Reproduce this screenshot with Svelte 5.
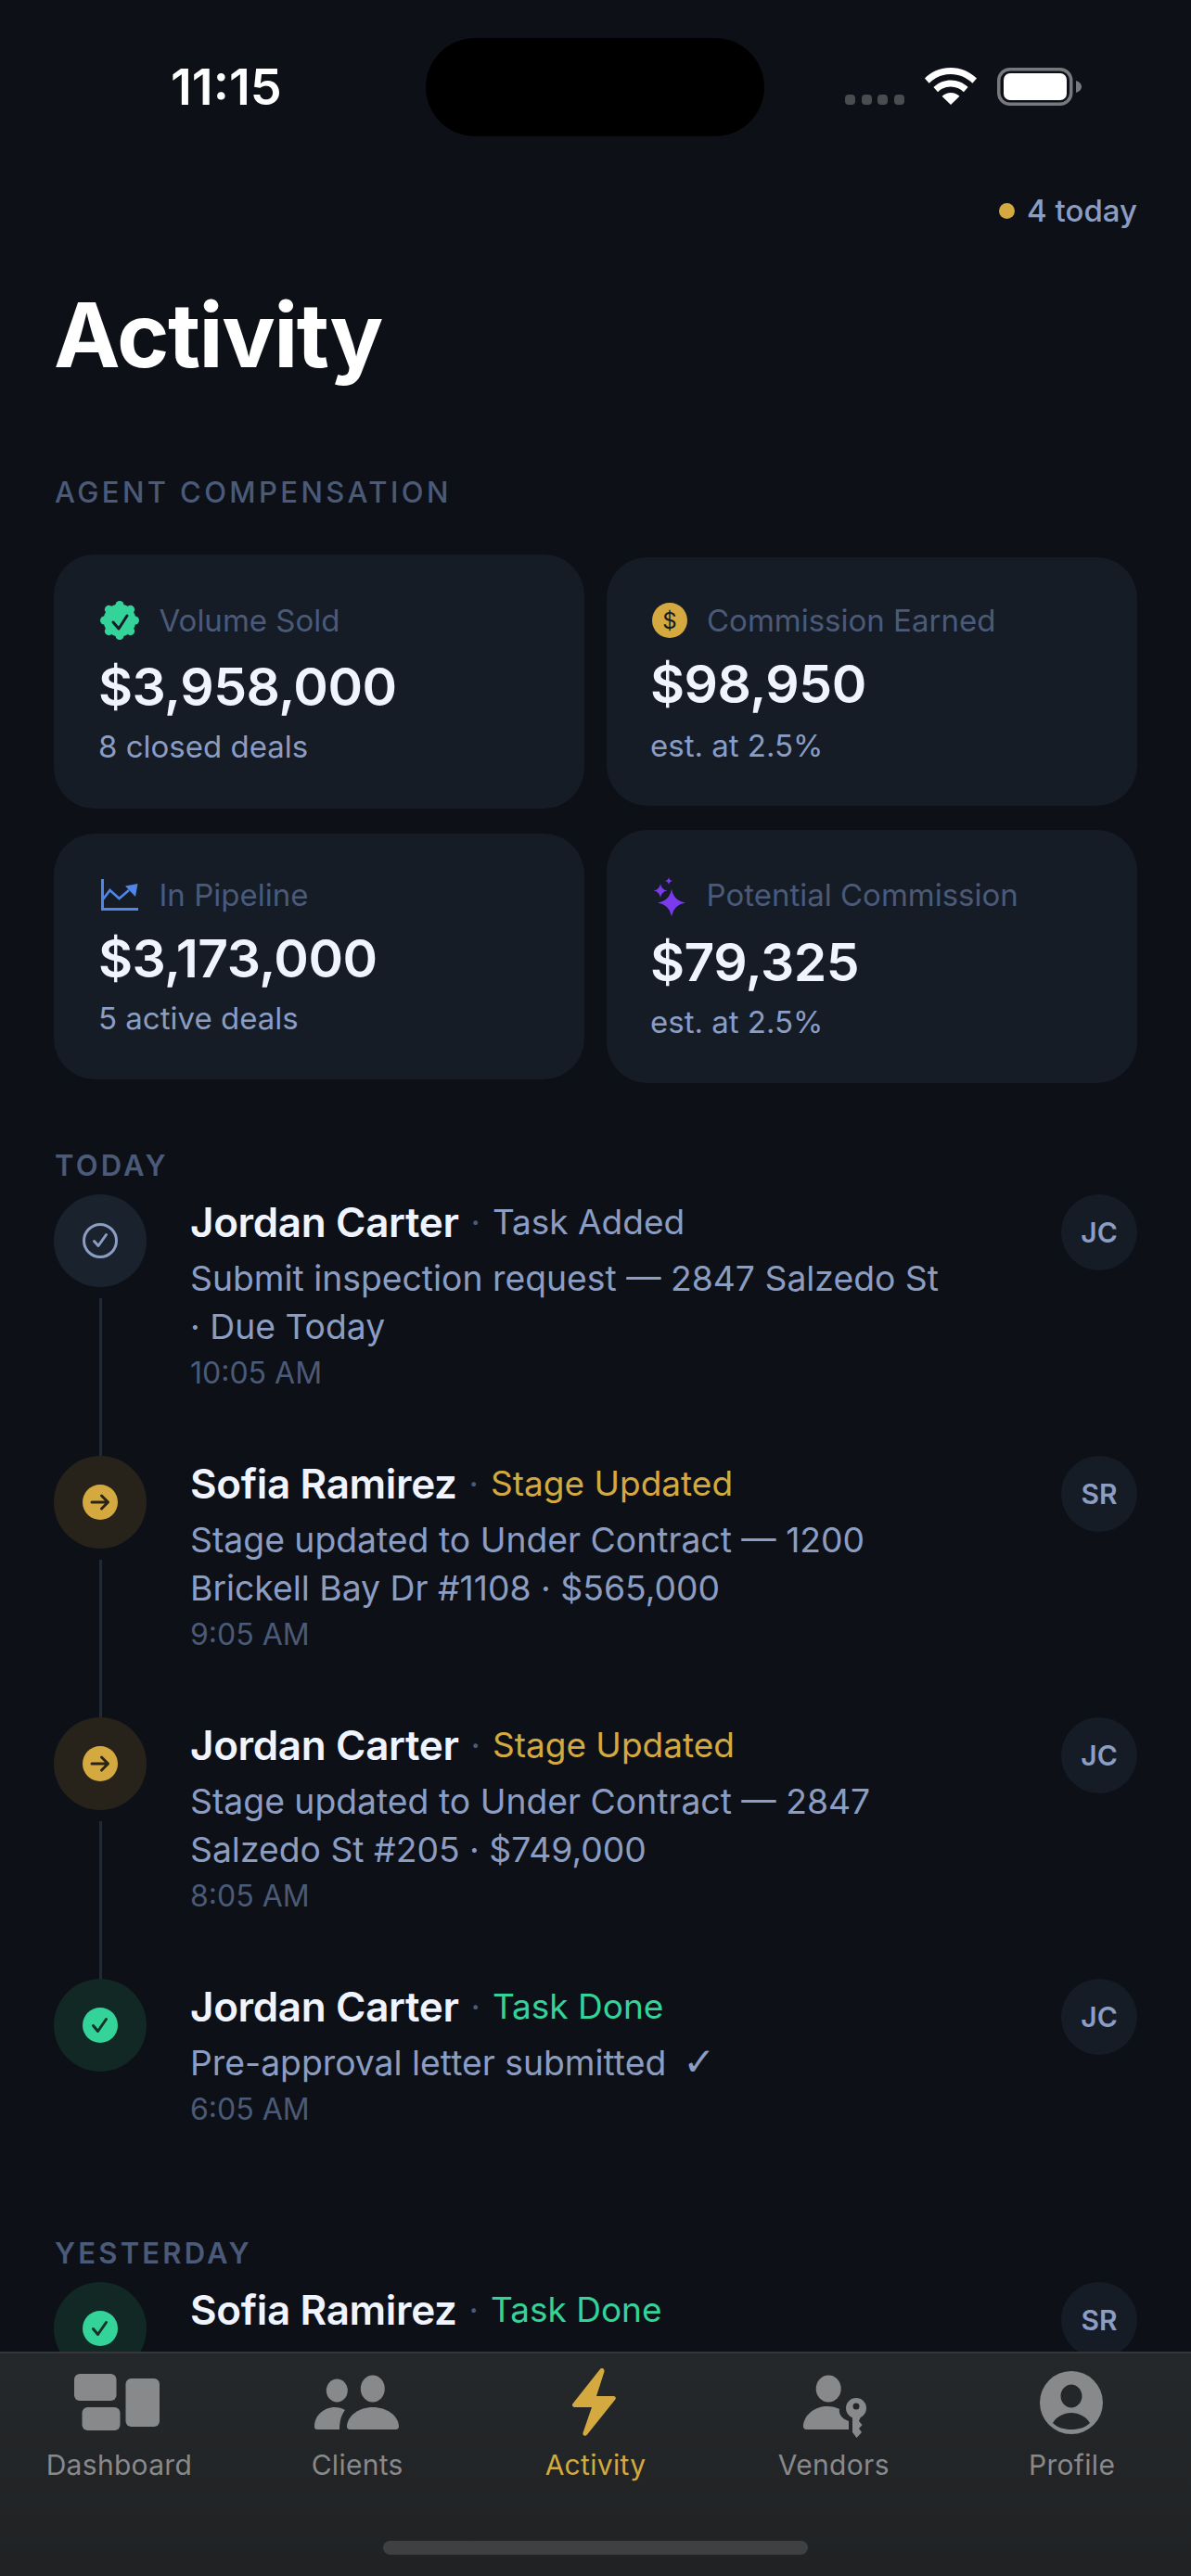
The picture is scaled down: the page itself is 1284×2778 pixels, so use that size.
<script>
  const tabs = [
    { label: "Dashboard", icon: "dash" },
    { label: "Clients", icon: "clients" },
    { label: "Activity", icon: "bolt", active: true },
    { label: "Vendors", icon: "vendors" },
    { label: "Profile", icon: "profile" },
  ];

  const today = [
    {
      name: "Jordan Carter",
      type: "Task Added",
      tone: "slate",
      lines: ["Submit inspection request — 2847 Salzedo St", "· Due Today"],
      time: "10:05 AM",
      initials: "JC",
    },
    {
      name: "Sofia Ramirez",
      type: "Stage Updated",
      tone: "gold",
      lines: ["Stage updated to Under Contract — 1200", "Brickell Bay Dr #1108 · $565,000"],
      time: "9:05 AM",
      initials: "SR",
    },
    {
      name: "Jordan Carter",
      type: "Stage Updated",
      tone: "gold",
      lines: ["Stage updated to Under Contract — 2847", "Salzedo St #205 · $749,000"],
      time: "8:05 AM",
      initials: "JC",
    },
    {
      name: "Jordan Carter",
      type: "Task Done",
      tone: "green",
      lines: ["Pre-approval letter submitted"],
      tick: true,
      time: "6:05 AM",
      initials: "JC",
    },
  ];

  const yesterday = [
    { name: "Sofia Ramirez", type: "Task Done", tone: "green", lines: [], time: "", initials: "SR" },
  ];

  // 8 lobes round the badge
  const lobes = Array.from({ length: 8 }, (_, i) => ({
    x: 16.5 * Math.cos((i * Math.PI) / 4),
    y: 16.5 * Math.sin((i * Math.PI) / 4),
  }));

  function star(cx, cy, r) {
    const k = r * 0.14;
    return `M${cx} ${cy - r}Q${cx + k} ${cy - k} ${cx + r} ${cy}Q${cx + k} ${cy + k} ${cx} ${cy + r}Q${cx - k} ${cy + k} ${cx - r} ${cy}Q${cx - k} ${cy - k} ${cx} ${cy - r}z`;
  }
</script>

{#snippet eventRow(item, last)}
  <div class="event">
    <div class="rail">
      <div class="bubble {item.tone}">
        {#if item.tone === "slate"}
          <svg class="mark" viewBox="0 0 38 38" fill="none" stroke="#8b9dc3" stroke-width="3" stroke-linecap="round" stroke-linejoin="round">
            <circle cx="19" cy="19" r="17.5" />
            <path d="M12.5 19.5l4.5 5 8.5-12" />
          </svg>
        {:else if item.tone === "gold"}
          <svg class="mark" viewBox="0 0 38 38" fill="none" stroke="#2a2418" stroke-width="3" stroke-linecap="round" stroke-linejoin="round">
            <circle cx="19" cy="19" r="19" fill="#d4a93f" stroke="none" />
            <path d="M10 19h17M20.5 12l7 7-7 7" />
          </svg>
        {:else}
          <svg class="mark" viewBox="0 0 38 38" fill="none" stroke="#14312a" stroke-width="3" stroke-linecap="round" stroke-linejoin="round">
            <circle cx="19" cy="19" r="19" fill="#34d399" stroke="none" />
            <path d="M11.5 19.5l5 6 9-13" />
          </svg>
        {/if}
      </div>
      {#if !last}<div class="line"></div>{/if}
    </div>
    <div class="body">
      <div class="head">
        <span class="name">{item.name}</span>
        <span class="sep">·</span>
        <span class="type {item.tone}">{item.type}</span>
      </div>
      {#each item.lines as line}
        <div class="desc">{line}{#if item.tick}<span class="tick">✓</span>{/if}</div>
      {/each}
      {#if item.time}<div class="time">{item.time}</div>{/if}
    </div>
    <div class="avatar">{item.initials}</div>
  </div>
{/snippet}

<div class="phone">
  <div class="status">
    <span class="clock">11:15</span>
    <div class="island"></div>
    <div class="status-right">
      <div class="dots"><i></i><i></i><i></i><i></i></div>
      <svg class="wifi" viewBox="0 0 56 40" fill="#fff">
        <path d="M28 0C17 0 7.500 4.300 0 11.500l4.600 5.200C10.800 10.700 19 7 28 7s17.200 3.700 23.400 9.700l4.600-5.200C48.500 4.300 39 0 28 0z" />
        <path d="M28 13.500c-7.300 0-13.800 2.900-18.600 7.500l4.700 5.200c3.600-3.500 8.500-5.700 13.900-5.700s10.300 2.200 13.900 5.700l4.700-5.200C41.800 16.400 35.300 13.500 28 13.500z" />
        <path d="M28 27c-3.700 0-7 1.400-9.500 3.800L28 40l9.500-9.200C35 28.400 31.700 27 28 27z" />
      </svg>
      <svg class="battery" viewBox="0 0 91 41">
        <rect x="1.750" y="1.750" width="78" height="37.500" rx="12" fill="none" stroke="#77797d" stroke-width="3.500" />
        <rect x="7" y="6" width="68" height="29" rx="7" fill="#fff" />
        <path d="M85 14c3 1 6 3 6 6.500s-3 5.500-6 6.500z" fill="#77797d" />
      </svg>
    </div>
  </div>

  <div class="count"><span class="dot"></span>4 today</div>
  <h1>Activity</h1>
  <div class="section-title">AGENT COMPENSATION</div>

  <div class="stats">
    <div class="stat-col">
      <div class="stat sold">
        <div class="stat-label">
          <svg class="badge" viewBox="-21 -21 42 42">
            <circle r="17.500" fill="#34d399" />
            {#each lobes as lobe}
              <circle cx={lobe.x} cy={lobe.y} r="4.500" fill="#34d399" />
            {/each}
            <path d="M-7 2l6 7 9-14" fill="none" stroke="#151c26" stroke-width="3" stroke-linecap="round" stroke-linejoin="round" />
          </svg>
          Volume Sold
        </div>
        <div class="stat-value">$3,958,000</div>
        <div class="stat-sub">8 closed deals</div>
      </div>
      <div class="stat pipeline">
        <div class="stat-label">
          <svg class="chart" viewBox="0 0 40 34" fill="none">
            <path d="M1.500 0v32.500H40" stroke="#4f86e8" stroke-width="3" />
            <path d="M2 22l7.500-10 10 9L30 12" stroke="#4f86e8" stroke-width="2.600" />
            <path d="M26 7.500L39.500 5 37 19z" fill="#4f86e8" />
          </svg>
          In Pipeline
        </div>
        <div class="stat-value">$3,173,000</div>
        <div class="stat-sub">5 active deals</div>
      </div>
    </div>
    <div class="stat-col right">
      <div class="stat earned">
        <div class="stat-label">
          <span class="coin">$</span>
          Commission Earned
        </div>
        <div class="stat-value">$98,950</div>
        <div class="stat-sub">est. at 2.5%</div>
      </div>
      <div class="stat potential">
        <div class="stat-label">
          <svg class="sparkle" viewBox="0 0 36 42" fill="#7c3aed">
            <path d={star(20, 27.5, 15)} />
            <path d={star(8, 14.5, 7.5)} />
            <path d={star(17, 4, 4)} />
          </svg>
          Potential Commission
        </div>
        <div class="stat-value">$79,325</div>
        <div class="stat-sub">est. at 2.5%</div>
      </div>
    </div>
  </div>

  <div class="day">TODAY</div>
  {#each today as item, i}
    {@render eventRow(item, i === today.length - 1)}
  {/each}

  <div class="day yesterday">YESTERDAY</div>
  {#each yesterday as item}
    {@render eventRow(item, true)}
  {/each}

  <nav class="tabs">
    <div class="tab-row">
      {#each tabs as tab}
        <div class="tab" class:active={tab.active}>
          <svg class="tab-icon" viewBox="0 0 100 80" fill="currentColor">
            {#if tab.icon === "dash"}
              <rect x="2" y="7" width="45.500" height="29" rx="6" />
              <rect x="10.500" y="43" width="41" height="25" rx="6" />
              <rect x="57.500" y="12" width="36.500" height="52" rx="6" />
            {:else if tab.icon === "clients"}
              <ellipse cx="28.300" cy="25" rx="11.500" ry="12.500" />
              <ellipse cx="66.800" cy="23" rx="13" ry="14.500" />
              <path d="M7 67c-2 0-3-1-3-3C4 52 14 43 26 43c4 0 8 1 11 3-4 5-6 12-6 21z" />
              <path d="M43 67c-3 0-4-1-4-4C40 52 52 43 67 43s27 9 28 20c0 3-1 4-4 4z" />
            {:else if tab.icon === "bolt"}
              <path d="M54.500 2.500c2-2.500 5.500-1.500 5 2L51 31h18c3 0 3.500 2.500 2 4L41 72.500c-2 2.500-5.500 1-4.500-2L46 43H28c-3 0-4-2.500-2-4.500z" />
            {:else if tab.icon === "vendors"}
              <ellipse cx="44.200" cy="23" rx="13.500" ry="14.500" />
              <path d="M21 67c-3 0-4.500-2-4-5C19 50 30 42 43 42c5 0 9 1 13 3-1 5 2 10 10 13v9z" />
              <path fill-rule="evenodd" d="M85 44a11 11 0 1 0-22 0a11 11 0 1 0 22 0zM74 38.500a3.500 3.500 0 1 1 0 7a3.500 3.500 0 1 1 0-7z" />
              <path d="M70 50V70l4.500 6 5.500-6-3-4 3.500-4-3.500-4 2-5z" />
            {:else}
              <path fill-rule="evenodd" d="M49 4a34 34 0 1 0 0 68a34 34 0 1 0 0-68zM49 18.500c6.300 0 11.500 5.600 11.500 12.500S55.300 43.500 49 43.500 37.500 37.900 37.500 31 42.700 18.500 49 18.500zM29 60c4-7 12-11 20-11s16 4 20 11c-5 5-12 7-20 7s-15-2-20-7z" />
            {/if}
          </svg>
          <span>{tab.label}</span>
        </div>
      {/each}
    </div>
    <div class="home"></div>
  </nav>
</div>

<style>
  :global(body) {
    margin: 0;
    background: #0d1117;
  }

  .phone {
    position: relative;
    width: 1284px;
    height: 2778px;
    overflow: hidden;
    background: #0d1117;
    box-sizing: border-box;
    padding: 0 58px;
    font-family: Inter, "Noto Sans", sans-serif;
    color: #f0f4ff;
  }

  .status {
    height: 190px;
    margin: 0 -58px;
    position: relative;
  }

  .clock {
    position: absolute;
    left: 184px;
    top: 64px;
    font-size: 54px;
    line-height: 60px;
    font-weight: 600;
    color: #fff;
  }

  .island {
    position: absolute;
    left: 459px;
    top: 41px;
    width: 365px;
    height: 106px;
    border-radius: 53px;
    background: #000;
  }

  .status-right {
    position: absolute;
    left: 911px;
    top: 72px;
    display: flex;
    align-items: flex-end;
    height: 42px;
  }

  .dots {
    display: flex;
    gap: 6.700px;
    margin-bottom: 1px;
    width: 86px;
  }

  .dots i {
    width: 11px;
    height: 11px;
    border-radius: 4px;
    background: #4a4c50;
  }

  .wifi {
    width: 56px;
    height: 40px;
    margin: 0 22px 1px 0;
  }

  .battery {
    width: 91px;
    height: 41px;
  }

  .count {
    display: flex;
    justify-content: flex-end;
    align-items: center;
    gap: 13px;
    font-size: 33px;
    line-height: 40px;
    color: #8b9dc3;
    font-weight: 500;
    height: 40px;
    margin-top: 17px;
  }

  .dot {
    width: 17px;
    height: 17px;
    border-radius: 50%;
    background: #d4a93f;
  }

  h1 {
    margin: 56px 0 0;
    font-size: 96px;
    line-height: 116px;
    font-weight: 700;
    color: #fff;
    letter-spacing: -1.500px;
  }

  .section-title {
    margin: 94px 0 0 1px;
    font-size: 31px;
    line-height: 36px;
    font-weight: 500;
    letter-spacing: 3.400px;
    color: #4a5a78;
  }

  .stats {
    display: flex;
    gap: 24px;
    margin-top: 49px;
  }

  .stat-col {
    flex: 1;
    display: flex;
    flex-direction: column;
    gap: 26px;
  }

  .stat {
    box-sizing: border-box;
    padding: 44px 40px 0 48px;
    border-radius: 44px;
    background: #151c26;
  }

  .right .stat {
    padding-left: 47px;
  }

  .sold {
    height: 274px;
    padding-top: 49px;
  }

  .pipeline {
    height: 265px;
    margin-top: 1px;
    padding-top: 44px;
  }

  .earned {
    height: 268px;
    margin-top: 3px;
    padding-top: 46px;
  }

  .potential {
    height: 273px;
    padding-top: 48px;
  }

  .stat-label {
    display: flex;
    align-items: center;
    height: 44px;
    font-size: 33px;
    color: #4a5a78;
    white-space: nowrap;
  }

  .badge {
    width: 42px;
    height: 42px;
    margin: 0 21.500px 0 2px;
    flex: none;
  }

  .chart {
    width: 40px;
    height: 34px;
    margin: 0 22.500px 0 3px;
    flex: none;
  }

  .coin {
    width: 38px;
    height: 38px;
    margin: 0 21px 0 2px;
    border-radius: 50%;
    background: #d4a93f;
    color: #151c26;
    font-size: 24px;
    display: flex;
    align-items: center;
    justify-content: center;
    flex: none;
  }

  .sparkle {
    width: 36px;
    height: 42px;
    margin: 3px 22px 0 2.500px;
    flex: none;
  }

  .stat-value {
    margin-top: 12.500px;
    font-size: 57px;
    line-height: 68px;
    font-weight: 600;
    letter-spacing: -0.500px;
    color: #f0f4ff;
  }

  .sold .stat-value {
    margin-top: 15.500px;
  }

  .potential .stat-value {
    margin-top: 16.500px;
  }

  .stat-sub {
    margin-top: 10.500px;
    font-size: 33px;
    line-height: 40px;
    color: #8b9dc3;
  }

  .earned .stat-sub {
    margin-top: 12px;
  }

  .day {
    margin: 71px 0 13px 1px;
    font-size: 31px;
    line-height: 36px;
    font-weight: 600;
    letter-spacing: 3.200px;
    color: #4a5a78;
  }

  .day.yesterday {
    margin: 117px 0 13px 1px;
  }

  .event {
    display: flex;
    gap: 47px;
  }

  .rail {
    width: 100px;
    flex: none;
    display: flex;
    flex-direction: column;
    align-items: center;
  }

  .bubble {
    width: 100px;
    height: 100px;
    border-radius: 50%;
    display: flex;
    align-items: center;
    justify-content: center;
    flex: none;
  }

  .bubble.slate {
    background: #1a222e;
  }

  .bubble.gold {
    background: #27231a;
  }

  .bubble.green {
    background: #122824;
  }

  .mark {
    width: 38px;
    height: 38px;
  }

  .line {
    width: 3px;
    height: 170px;
    margin-top: 12px;
    background: #1e2a3a;
  }

  .body {
    flex: 1;
    min-width: 0;
  }

  .head {
    display: flex;
    align-items: center;
    gap: 13px;
    height: 60px;
    line-height: 60px;
    margin-bottom: 5px;
  }

  .name {
    font-size: 44px;
    font-weight: 600;
    letter-spacing: -0.350px;
    color: #f0f4ff;
  }

  .sep {
    font-size: 36px;
    color: #4a5a78;
  }

  .type {
    font-size: 37px;
  }

  .type.slate {
    color: #8b9dc3;
  }

  .type.gold {
    color: #d4a93f;
  }

  .type.green {
    color: #34d399;
  }

  .desc {
    font-size: 37.300px;
    line-height: 52px;
    color: #8b9dc3;
    white-space: nowrap;
  }

  .tick {
    margin-left: 18px;
    font-family: "DejaVu Sans", sans-serif;
    font-size: 42px;
    line-height: 40px;
  }

  .time {
    margin-top: 4px;
    font-size: 32px;
    line-height: 40px;
    color: #4a5a78;
  }

  .avatar {
    width: 82px;
    height: 82px;
    flex: none;
    border-radius: 50%;
    background: #151c26;
    color: #8b9dc3;
    font-size: 30px;
    font-weight: 600;
    display: flex;
    align-items: center;
    justify-content: center;
  }

  .tabs {
    position: absolute;
    left: 0;
    right: 0;
    bottom: 0;
    height: 242px;
    box-sizing: border-box;
    border-top: 2px solid #33363a;
    background: linear-gradient(#25282a, #202224);
  }

  .tab-row {
    display: flex;
  }

  .tab {
    flex: 1;
    display: flex;
    flex-direction: column;
    align-items: center;
    color: #88898b;
    font-size: 30px;
    letter-spacing: 0.300px;
    padding-top: 15px;
  }

  .tab.active {
    color: #d4a93f;
  }

  .tab-icon {
    width: 100px;
    height: 80px;
    overflow: visible;
    margin-bottom: 7px;
  }

  .home {
    position: absolute;
    left: 413px;
    bottom: 23px;
    width: 458px;
    height: 15px;
    border-radius: 8px;
    background: #3f4042;
  }
</style>
